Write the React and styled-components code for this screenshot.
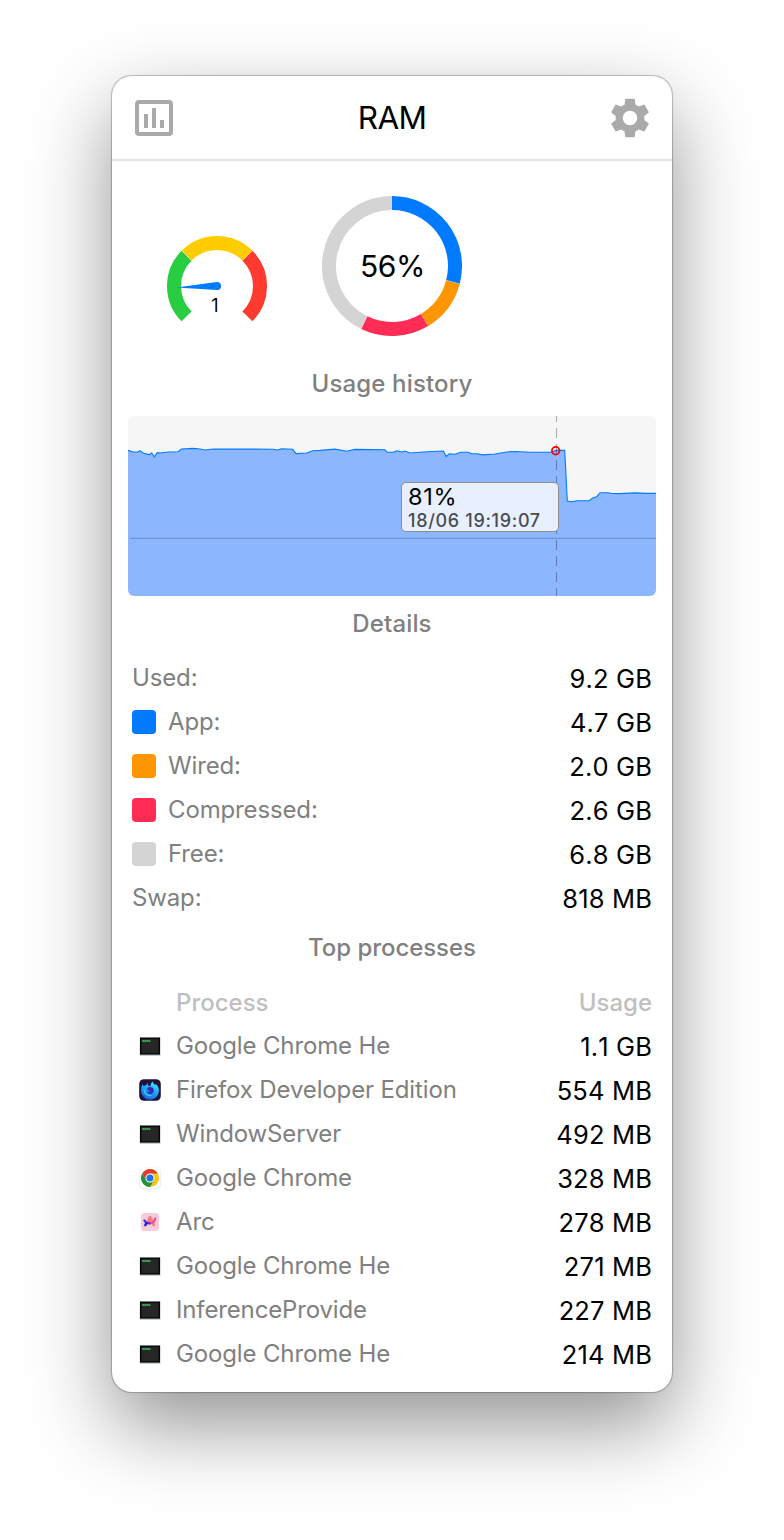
import React from "react";
import styled, { createGlobalStyle } from "styled-components";
import { MdSettings } from "react-icons/md";

const GlobalStyle = createGlobalStyle`
  * {
    box-sizing: border-box;
  }

  body {
    margin: 0;
    background: #fff;
    font-family: Inter, "Liberation Sans", sans-serif;
  }
`;

const details = [
  { label: "Used:", value: "9.2 GB" },
  { label: "App:", value: "4.7 GB", color: "#007aff" },
  { label: "Wired:", value: "2.0 GB", color: "#ff9500" },
  { label: "Compressed:", value: "2.6 GB", color: "#ff2d55" },
  { label: "Free:", value: "6.8 GB", color: "#d4d4d4" },
  { label: "Swap:", value: "818 MB" },
];

const processes = [
  { icon: "terminal", name: "Google Chrome He", usage: "1.1 GB" },
  { icon: "firefox", name: "Firefox Developer Edition", usage: "554 MB" },
  { icon: "terminal", name: "WindowServer", usage: "492 MB" },
  { icon: "chrome", name: "Google Chrome", usage: "328 MB" },
  { icon: "arc", name: "Arc", usage: "278 MB" },
  { icon: "terminal", name: "Google Chrome He", usage: "271 MB" },
  { icon: "terminal", name: "InferenceProvide", usage: "227 MB" },
  { icon: "terminal", name: "Google Chrome He", usage: "214 MB" },
];

const history =
  "0,34.3 5,36 10,36 12,34.6 15.3,37.3 21.3,38.6 23.7,37 26.3,40.7 29.3,36.6 32,37 40.3,36 50.3,35.7 53.3,33 65.3,32.4 72,33 77,34 85.3,33 145,33.2 149.3,34 153.7,32.8 164.7,33.3 168,37.6 178.7,37 184.7,34.7 192,34.4 207,33.1 218.7,35.3 227,33.4 257,33.7 259.3,36.3 265.3,36.3 268.7,34.8 273.7,36 277,35 282,37 295.3,36 315.3,35 318.3,40.5 321.3,37.7 327,38.3 332.7,36.2 340.3,36.2 343.7,37.7 349.3,37.7 354.3,38.9 367,38 378.7,36 387,35.5 402,36.3 423.7,36.3 427.7,34.4 436.7,34.4 439.3,85 443.7,85.7 448.7,84.8 461,84.8 464.7,82 468.7,80.7 472,76.7 480.3,76.7 483.7,77.5 492,77.6 507,76.9 518.7,77.4 528,77.4";

// point on a circle, angle in degrees clockwise from the top
const polar = (cx, cy, r, deg) => {
  const a = ((deg - 90) * Math.PI) / 180;
  return `${(cx + r * Math.cos(a)).toFixed(2)} ${(cy + r * Math.sin(a)).toFixed(2)}`;
};

const arc = (cx, cy, r, from, to) =>
  `M${polar(cx, cy, r, from)}A${r} ${r} 0 ${to - from > 180 ? 1 : 0} 1 ${polar(cx, cy, r, to)}`;

const ChartIcon = () => (
  <svg width="38" height="36" viewBox="0 0 38 36">
    <rect x="2" y="2" width="34" height="32" rx="2" fill="none" stroke="#aaa" strokeWidth="4" />
    <path d="M9 14h4v14H9zM17 8h4v20h-4zM25 20h4v8h-4z" fill="#aaa" />
  </svg>
);

const TerminalIcon = () => (
  <svg width="24" height="24" viewBox="0 0 24 24">
    <rect x="1.6" y="3" width="21" height="19" rx="0.8" fill="#c4cdd0" />
    <rect x="2" y="3.6" width="20" height="17" fill="#060606" />
    <rect x="3.4" y="4.8" width="17.2" height="14.4" fill="#262626" />
    <path d="M4 7h8.6" stroke="#27703a" strokeWidth="2" />
    <path d="M4.300 7h8.200" stroke="#3cb559" strokeWidth="1.3" strokeDasharray="1.6 0.5" />
  </svg>
);

const FirefoxIcon = () => (
  <svg width="24" height="24" viewBox="0 0 24 24">
    <defs>
      <linearGradient id="fox" x1="0.8" y1="0" x2="0.3" y2="1">
        <stop offset="0" stopColor="#4ff0fa" />
        <stop offset="0.45" stopColor="#16aefb" />
        <stop offset="1" stopColor="#1560e0" />
      </linearGradient>
    </defs>
    <rect x="1.2" y="1.2" width="21.6" height="21.6" rx="4.8" fill="#20123a" />
    <path
      d="M4.4 6.6L5.8 8C6.600 7.500 7.400 7.300 8 7.200L9.600 5L10 7.400L12.600 8.200C12.500 6.400 13.200 4.700 14.600 3.600C14.900 5.200 16.100 6 17.200 7L17.600 6C19.800 7.600 21 10 20.900 12.700A8.900 8.900 0 0 1 3.100 12.900C3 10.500 3.400 8.300 4.400 6.600z"
      fill="url(#fox)"
    />
    <path
      d="M9.200 10C10.600 8.600 13.800 8.700 15.200 10.600C16.600 12.700 15.500 15.600 12.900 16C10.800 16.300 9.200 15.200 8.700 13.600C10 14.200 11.300 13.900 11.900 13C10.500 12.900 9.100 11.800 9.200 10z"
      fill="#3a25b4"
    />
    <path d="M6.200 12C6.600 15.600 9.400 18 12.800 17.600" fill="none" stroke="#46c8ff" strokeWidth="1.200" strokeLinecap="round" />
  </svg>
);

const ChromeIcon = () => (
  <svg width="24" height="24" viewBox="0 0 24 24">
    <rect x="1.2" y="1.6" width="21.6" height="21.6" rx="4.8" fill="#e2e2e2" />
    <rect x="1.6" y="1.5" width="20.8" height="20.9" rx="4.6" fill="#fff" />
    <circle cx="12" cy="12" r="9" fill="#fbc116" />
    <path d="M4.210 7.500A9 9 0 0 1 19.790 7.500H12L8.100 14.250z" fill="#e33b2e" />
    <path d="M4.210 7.500A9 9 0 0 0 12 21L15.900 14.250 8.100 14.250z" fill="#229342" />
    <circle cx="12" cy="12" r="4.5" fill="#fff" />
    <circle cx="12" cy="12" r="3.5" fill="#1a73e8" />
  </svg>
);

const ArcIcon = () => (
  <svg width="24" height="24" viewBox="0 0 24 24">
    <rect x="3" y="3" width="18" height="18" rx="3.6" fill="#f6cbdc" />
    <g fill="none" strokeLinecap="round" strokeLinejoin="round">
      <path d="M9.400 12.800L12 7.200L15.900 15" stroke="#fd7d7a" strokeWidth="2.800" />
      <path d="M9.600 11.800L12 7.200L14 11.500z" fill="#fd7d7a" stroke="#fd7d7a" strokeWidth="1" />
      <path d="M11.400 13.300C14 13.600 16.600 11.400 17.300 8.600" stroke="#f2479a" strokeWidth="2.200" />
      <path d="M6.400 10.400C7.200 12.200 9 13.400 11.400 13.300" stroke="#4a2be6" strokeWidth="2.200" />
      <path d="M7.300 15.200L8.400 13.200" stroke="#2b1fd6" strokeWidth="2.400" />
    </g>
  </svg>
);

const icons = {
  terminal: TerminalIcon,
  firefox: FirefoxIcon,
  chrome: ChromeIcon,
  arc: ArcIcon,
};

const Gauge = () => (
  <GaugeBox>
    <svg width="100" height="100" viewBox="0 0 100 100">
      <g fill="none" strokeWidth="14">
        <path d={arc(50, 50, 43, 225, 314.8)} stroke="#28cd41" />
        <path d={arc(50, 50, 43, 315.2, 404.8)} stroke="#ffcc00" />
        <path d={arc(50, 50, 43, 405.2, 495)} stroke="#ff3b30" />
      </g>
      <path d="M9.5 51.4L49.7 46A4 4 0 0 1 50.3 54z" fill="#007aff" />
    </svg>
    <GaugeValue>1</GaugeValue>
  </GaugeBox>
);

const Donut = () => (
  <DonutBox>
    <svg width="140" height="140" viewBox="0 0 140 140">
      <g fill="none" strokeWidth="14">
        <path d={arc(70, 70, 63, 206.2, 360)} stroke="#d4d4d4" />
        <path d={arc(70, 70, 63, 0, 104.6)} stroke="#007aff" />
        <path d={arc(70, 70, 63, 104.8, 148.8)} stroke="#ff9500" />
        <path d={arc(70, 70, 63, 149, 206)} stroke="#ff2d55" />
      </g>
    </svg>
    <DonutValue>56%</DonutValue>
  </DonutBox>
);

const App = () => {
  return (
    <Page>
      <GlobalStyle />
      <Card>
        <Header>
          <ChartIcon />
          <Title>RAM</Title>
          <MdSettings size={48} color="#aaa" />
        </Header>

        <Charts>
          <Gauge />
          <Donut />
        </Charts>

        <SectionTitle $spacing={0.15}>Usage history</SectionTitle>
        <History>
          <svg width="528" height="180" viewBox="0 0 528 180">
            <polygon points={`0,180 ${history} 528,180`} fill="#8cb7ff" />
            <polyline points={history} fill="none" stroke="#007aff" strokeWidth="1.1" />
            <path d="M2 122.400H528" stroke="#6f94cf" strokeWidth="1.2" />
            <path
              d="M428.500 -4V180"
              stroke="#000"
              strokeOpacity="0.3"
              strokeWidth="1.1"
              strokeDasharray="10 6"
            />
            <circle cx="427.7" cy="34.7" r="3.8" fill="none" stroke="#ff0000" strokeWidth="1.8" />
          </svg>
          <Tooltip>
            <TooltipValue>81%</TooltipValue>
            <TooltipTime>18/06 19:19:07</TooltipTime>
          </Tooltip>
        </History>

        <SectionTitle $spacing={0.15}>Details</SectionTitle>
        <List>
          {details.map((item) => (
            <Row key={item.label}>
              {item.color && <Swatch $color={item.color} />}
              <Label>{item.label}</Label>
              <Value>{item.value}</Value>
            </Row>
          ))}
        </List>

        <SectionTitle $spacing={-0.05}>Top processes</SectionTitle>
        <List>
          <TableHead>
            <span>Process</span>
            <span>Usage</span>
          </TableHead>
          {processes.map((item) => {
            const Icon = icons[item.icon];
            return (
              <Row key={item.usage}>
                <IconCell>
                  <Icon />
                </IconCell>
                <Label>{item.name}</Label>
                <Value>{item.usage}</Value>
              </Row>
            );
          })}
        </List>
      </Card>
    </Page>
  );
};

const Page = styled.main`
  display: flex;
  justify-content: center;
  align-items: flex-start;
  width: 784px;
  height: 1540px;
  padding-top: 76px;
  overflow: hidden;
`;

const Card = styled.section`
  width: 560px;
  height: 1316px;
  border-radius: 20px;
  background: #fff;
  box-shadow:
    0 0 1px 0.5px rgba(0, 0, 0, 0.24),
    0 33px 82px rgba(0, 0, 0, 0.43);
`;

const Header = styled.header`
  display: flex;
  align-items: center;
  justify-content: space-between;
  height: 85px;
  padding: 0 18px 0 23px;
  border-bottom: 2px solid #e5e5e5;

  svg {
    flex: none;
  }
`;

const Title = styled.h1`
  margin: 0 0 0 5px;
  font-size: 31.5px;
  font-weight: 400;
  line-height: 40px;
  letter-spacing: -0.7px;
  color: #000;
`;

const Charts = styled.div`
  display: flex;
  align-items: flex-start;
  gap: 55px;
  height: 195px;
  padding: 35px 0 0 55px;
`;

const GaugeBox = styled.div`
  display: grid;
  width: 100px;
  height: 100px;
  margin-top: 40px;

  > * {
    grid-area: 1 / 1;
  }
`;

const GaugeValue = styled.span`
  padding: 58px 4px 0 0;
  font-size: 18px;
  line-height: 24px;
  text-align: center;
`;

const DonutBox = styled.div`
  display: grid;
  place-items: center;
  width: 140px;
  height: 140px;

  > * {
    grid-area: 1 / 1;
  }
`;

const DonutValue = styled.span`
  padding-left: 1px;
  font-size: 30px;
  line-height: 36px;
  letter-spacing: -0.4px;
`;

const SectionTitle = styled.h2`
  margin: 0;
  height: 60px;
  padding-top: 12px;
  font-size: 24px;
  font-weight: 500;
  line-height: 32px;
  letter-spacing: ${(props) => props.$spacing}px;
  text-align: center;
  color: #808080;
`;

const History = styled.div`
  position: relative;
  width: 528px;
  height: 180px;
  margin: 0 16px;
  border-radius: 6px;
  background: #f6f6f6;
  overflow: hidden;

  svg {
    display: block;
  }
`;

const Tooltip = styled.div`
  position: absolute;
  left: 273px;
  top: 66px;
  width: 158px;
  height: 50px;
  padding: 1px 6px 0;
  border: 1.5px solid #8e8e8e;
  border-radius: 5px;
  background: #e8f0ff;
`;

const TooltipValue = styled.div`
  font-size: 23.5px;
  line-height: 26px;
  letter-spacing: 0.7px;
  color: #000;
`;

const TooltipTime = styled.div`
  font-size: 18px;
  font-weight: 500;
  line-height: 22px;
  letter-spacing: 0.68px;
  white-space: nowrap;
  color: #4a4c50;
`;

const List = styled.div`
  display: flex;
  flex-direction: column;
  padding: 0 20px;
`;

const Row = styled.div`
  display: flex;
  align-items: center;
  height: 44px;
`;

const Swatch = styled.span`
  width: 24px;
  height: 24px;
  margin-right: 12px;
  border-radius: 4px;
  background: ${(props) => props.$color};
`;

const IconCell = styled.span`
  display: flex;
  width: 44px;
  padding-left: 6px;
`;

const Label = styled.span`
  font-size: 24px;
  line-height: 30px;
  letter-spacing: -0.14px;
  color: #808080;
`;

const Value = styled.span`
  margin-left: auto;
  padding-top: 2px;
  font-size: 25.5px;
  line-height: 30px;
  letter-spacing: 0.15px;
  font-kerning: none;
  color: #000;
`;

const TableHead = styled.div`
  display: flex;
  align-items: center;
  justify-content: space-between;
  height: 44px;
  padding-left: 44px;
  font-size: 24px;
  font-weight: 500;
  color: #bfbfbf;
`;

export default App;
